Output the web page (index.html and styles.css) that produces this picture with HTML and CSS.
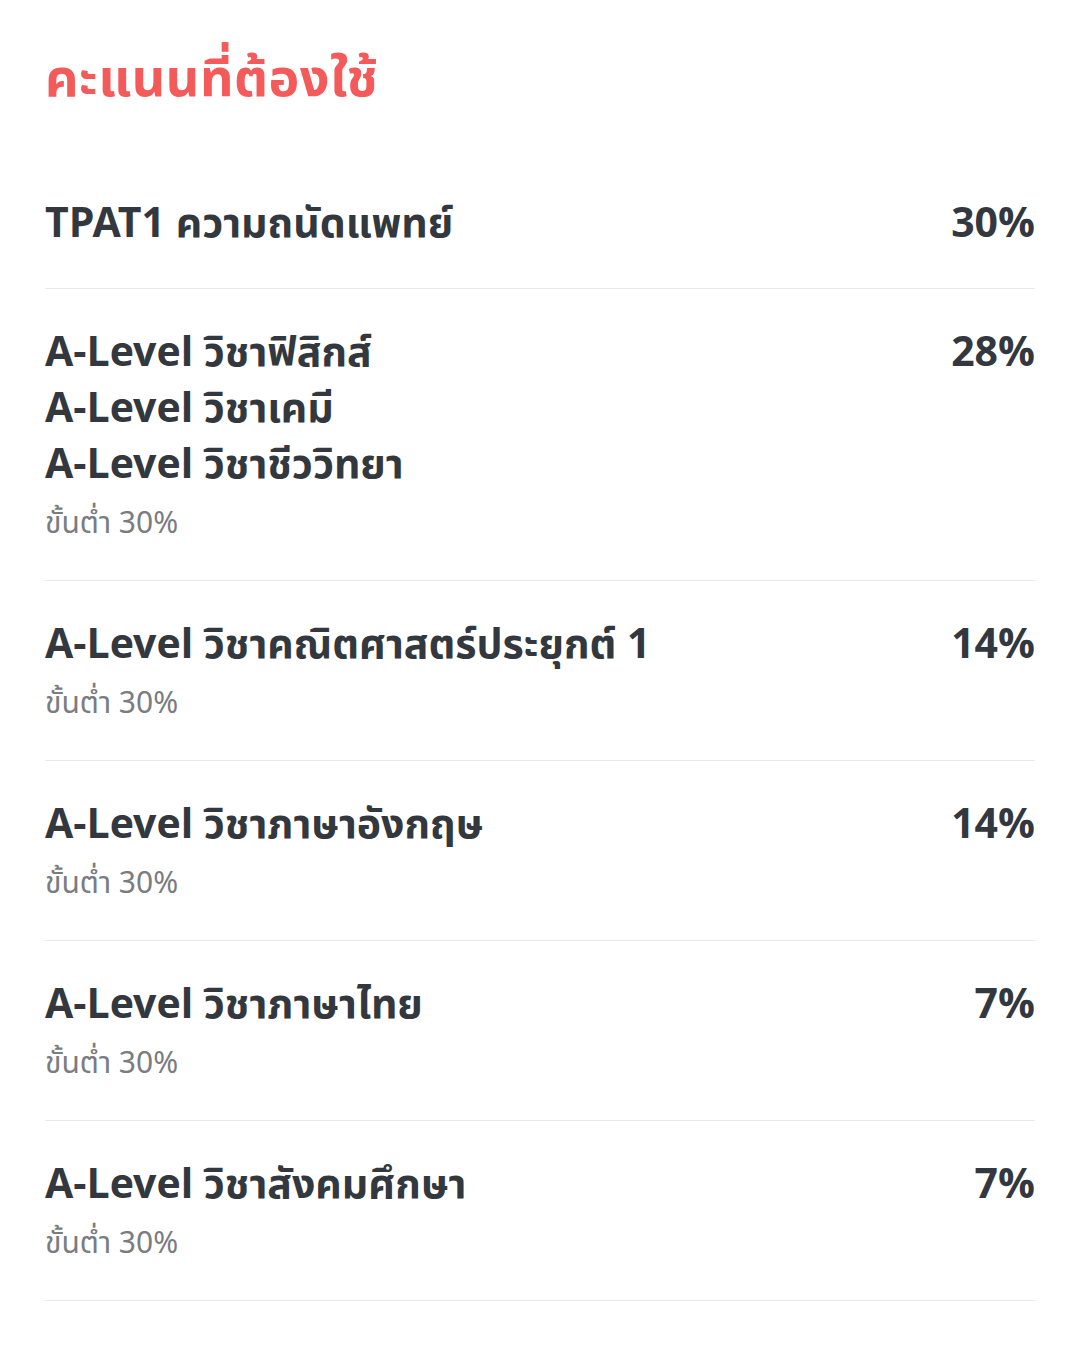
FILE: index.html
```html
<!DOCTYPE html>
<html lang="th">
<head>
<meta charset="utf-8">
<title>คะแนนที่ต้องใช้</title>
<link rel="stylesheet" href="styles.css">
</head>
<body>
<main class="page">
  <h1 class="title">คะแนนที่ต้องใช้</h1>
  <ul class="list">
    <li class="row">
      <div class="info">
        <div class="name">TPAT1 ความถนัดแพทย์</div>
      </div>
      <div class="pct">30%</div>
    </li>
    <li class="row">
      <div class="info">
        <div class="name">A-Level วิชาฟิสิกส์</div>
        <div class="name">A-Level วิชาเคมี</div>
        <div class="name">A-Level วิชาชีววิทยา</div>
        <div class="min">ขั้นต่ำ 30%</div>
      </div>
      <div class="pct">28%</div>
    </li>
    <li class="row">
      <div class="info">
        <div class="name">A-Level วิชาคณิตศาสตร์ประยุกต์ 1</div>
        <div class="min">ขั้นต่ำ 30%</div>
      </div>
      <div class="pct">14%</div>
    </li>
    <li class="row">
      <div class="info">
        <div class="name">A-Level วิชาภาษาอังกฤษ</div>
        <div class="min">ขั้นต่ำ 30%</div>
      </div>
      <div class="pct">14%</div>
    </li>
    <li class="row">
      <div class="info">
        <div class="name">A-Level วิชาภาษาไทย</div>
        <div class="min">ขั้นต่ำ 30%</div>
      </div>
      <div class="pct">7%</div>
    </li>
    <li class="row">
      <div class="info">
        <div class="name">A-Level วิชาสังคมศึกษา</div>
        <div class="min">ขั้นต่ำ 30%</div>
      </div>
      <div class="pct">7%</div>
    </li>
  </ul>
</main>
</body>
</html>
```
FILE: styles.css
```css
html, body {
  margin: 0;
  padding: 0;
  background: #ffffff;
}
body {
  font-family: "Noto Sans Thai", "Kanit", "Prompt", "Noto Sans", "DejaVu Sans", sans-serif;
  color: #33383e;
}
.page {
  padding: 50px 45px 0 45px;
}
.title {
  margin: 0 0 50px 0;
  font-size: 52px;
  line-height: 60px;
  letter-spacing: 0.5px;
  font-weight: 700;
  color: #f45a5a;
}
.list {
  list-style: none;
  margin: 0;
  padding: 0;
}
.row {
  display: flex;
  justify-content: space-between;
  align-items: flex-start;
  padding: 36px 0 36px 0;
  border-bottom: 1px solid #e9e9e9;
}
.info {
  display: flex;
  flex-direction: column;
}
.name {
  font-size: 41px;
  line-height: 56px;
  font-weight: 700;
  white-space: nowrap;
}
.min {
  margin-top: 11px;
  font-size: 30px;
  line-height: 40px;
  color: #7a7c80;
}
.pct {
  font-size: 41px;
  line-height: 56px;
  font-weight: 700;
}
```
